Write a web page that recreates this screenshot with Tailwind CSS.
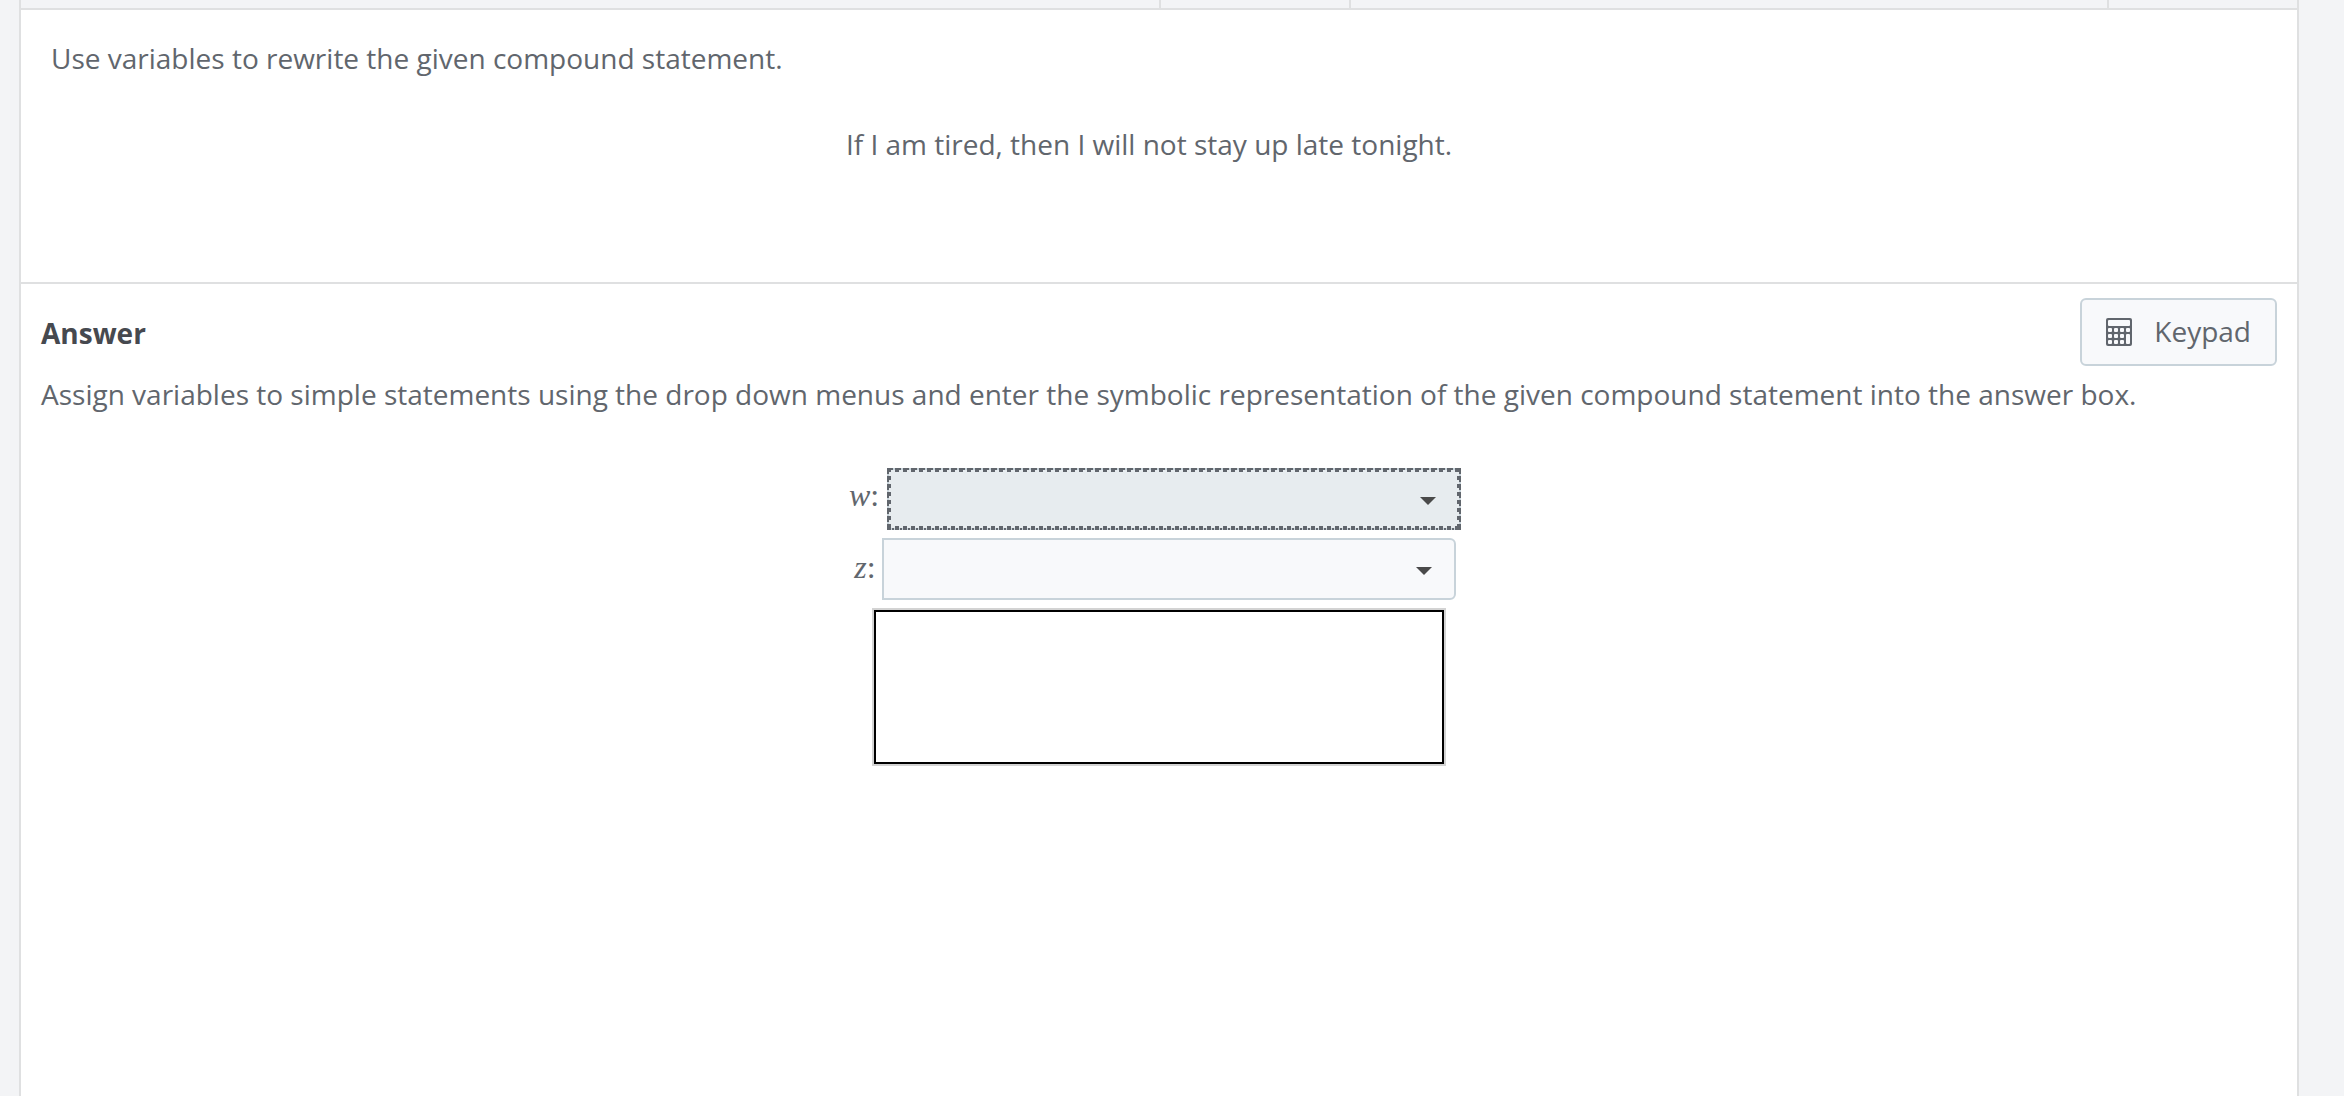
<!DOCTYPE html>
<html lang="en">
<head>
    <meta charset="UTF-8">
    <meta name="viewport" content="width=device-width, initial-scale=1.0">
    <title>Compound Statements</title>
    <script src="https://cdn.jsdelivr.net/npm/@tailwindcss/browser@4"></script>
</head>
<body class="bg-[#f3f4f6] text-[#61666d] text-[28px] leading-10 font-['Open_Sans',sans-serif]">

    <div class="flex flex-col min-h-screen ml-[19px] mr-[45px] bg-white border-x-2 border-[#dfe0e1]">

        <!-- Bottom edge of the toolbar -->
        <header class="flex h-[10px] bg-[#f3f4f6] border-b-2 border-[#dfe0e1]">
            <div class="grow-2"></div>
            <div class="w-[192px] border-x-2 border-[#dfe0e1]"></div>
            <div class="w-[756px]"></div>
            <div class="w-[190px] border-l-2 border-[#dfe0e1]"></div>
        </header>

        <!-- Question -->
        <section class="h-[274px] pl-[30px] pr-[50px] pt-7 border-b-2 border-[#dfe0e1]">
            <p>Use variables to rewrite the given compound statement.</p>
            <p class="mt-[46px] text-center">If I am tired, then I will not stay up late tonight.</p>
        </section>

        <!-- Answer -->
        <main class="px-5 pt-[14px]">
            <div class="flex items-center justify-between">
                <h2 class="pt-[2px] font-bold text-[#46494f]">Answer</h2>
                <button type="button" class="flex items-center h-[68px] px-6 gap-[22px] bg-[#f8f9fb] border-2 border-[#c8d3da] rounded-md">
                    <svg class="w-[26px] h-[28px]" viewBox="0 0 26 28" aria-hidden="true">
                        <rect width="26" height="28" rx="2" fill="#61666d"/>
                        <g fill="#f8f9fb">
                            <rect x="2" y="2" width="22" height="6" rx="1"/>
                            <rect x="2" y="10" width="4" height="4" rx="1"/>
                            <rect x="8" y="10" width="4" height="4" rx="1"/>
                            <rect x="14" y="10" width="4" height="4" rx="1"/>
                            <rect x="20" y="10" width="4" height="4" rx="1"/>
                            <rect x="2" y="16" width="4" height="4" rx="1"/>
                            <rect x="8" y="16" width="4" height="4" rx="1"/>
                            <rect x="14" y="16" width="4" height="4" rx="1"/>
                            <rect x="2" y="22" width="4" height="4" rx="1"/>
                            <rect x="8" y="22" width="4" height="4" rx="1"/>
                            <rect x="14" y="22" width="4" height="4" rx="1"/>
                            <rect x="20" y="16" width="4" height="10" rx="1"/>
                        </g>
                    </svg>
                    <span class="pb-[2px]">Keypad</span>
                </button>
            </div>
            <p class="mt-2">Assign variables to simple statements using the drop down menus and enter the symbolic representation of the given compound statement into the answer box.</p>

            <form class="flex flex-col items-center gap-2 mt-[54px]">
                <div class="flex items-center gap-2 pr-2">
                    <label for="statement-w" class="pb-2 font-['Liberation_Serif',serif] text-[32px]"><i>w</i>:</label>
                    <div class="relative">
                        <select id="statement-w" class="block appearance-none w-[574px] h-[62px] px-4 bg-[#e7ecef] border-2 border-[#c8d3da] outline-none">
                            <option value=""></option>
                        </select>
                        <!-- Focus ring -->
                        <svg class="absolute inset-0 w-full h-full pointer-events-none" fill="none" stroke="#61666d" aria-hidden="true">
                            <path d="M0 2H574M0 60H574" stroke-width="4" stroke-dasharray="4 4"/>
                            <path d="M2 0V62M572 0V62" stroke-width="4" stroke-dasharray="4 4"/>
                            <path d="M0 1H574M1 0V62M573 0V62" stroke-width="2" stroke-dasharray="2 2"/>
                            <path d="M1 61H574" stroke-width="2" stroke-dasharray="2 2"/>
                        </svg>
                        <svg class="absolute right-[25px] top-[29px] w-4 h-2 pointer-events-none" viewBox="0 0 16 8" aria-hidden="true"><path d="M0 0h16L8 8z" fill="#4a4a4a"/></svg>
                    </div>
                </div>
                <div class="flex items-center gap-1.5 pr-2">
                    <label for="statement-z" class="pb-1 font-['Liberation_Serif',serif] text-[32px]"><i>z</i>:</label>
                    <div class="relative">
                        <select id="statement-z" class="block appearance-none w-[574px] h-[62px] px-4 bg-[#f8f9fb] border-2 border-[#c8d3da] rounded-r-md">
                            <option value=""></option>
                        </select>
                        <svg class="absolute right-6 top-[29px] w-4 h-2 pointer-events-none" viewBox="0 0 16 8" aria-hidden="true"><path d="M0 0h16L8 8z" fill="#4a4a4a"/></svg>
                    </div>
                </div>
                <textarea aria-label="Symbolic answer" class="block resize-none w-[570px] h-[154px] m-[2px] p-3 bg-white border-2 border-black ring-2 ring-[#d3d3d3] outline-none"></textarea>
            </form>
        </main>
    </div>

</body>
</html>
